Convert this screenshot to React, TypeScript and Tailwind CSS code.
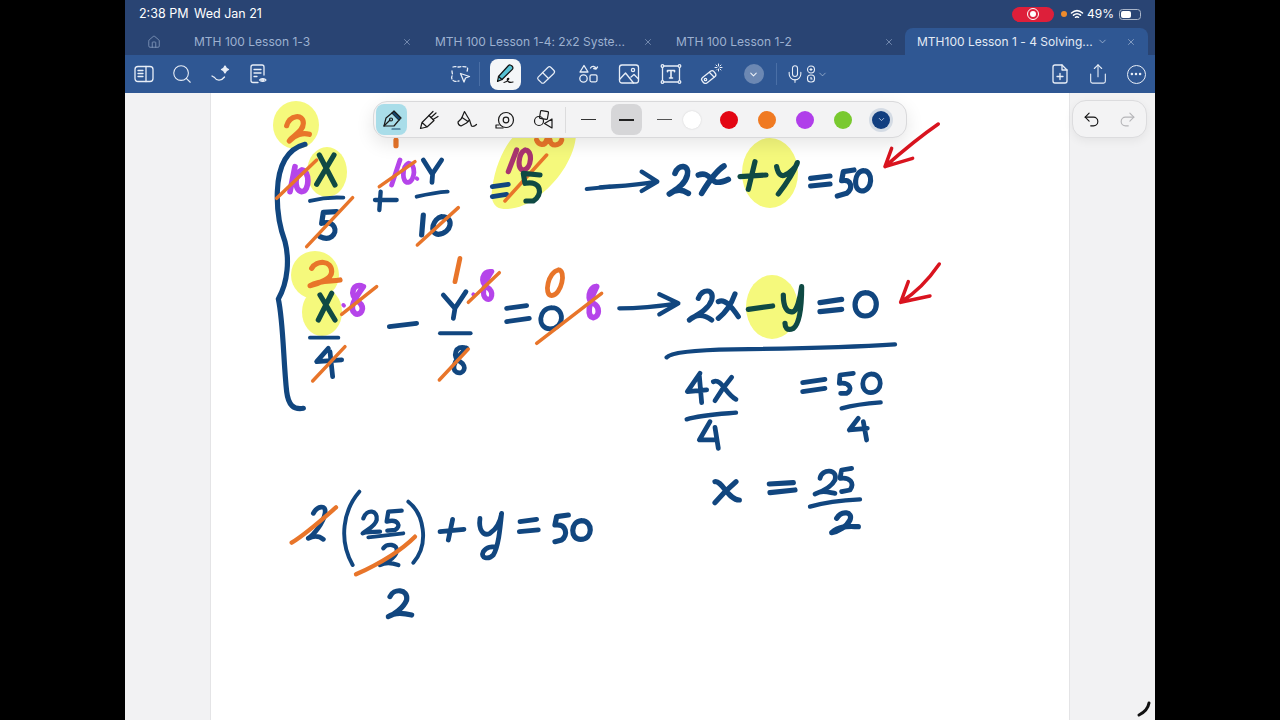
import { ChevronDown, X, Search, Share, Ellipsis, House, Undo2, Redo2, Mic } from 'lucide-react'

const font = { fontFamily: 'Inter, "Liberation Sans", sans-serif' }

const BLUE = '#11467f'
const GREEN = '#0f4a44'
const ORANGE = '#e8752a'
const PURPLE = '#b545ea'
const RED = '#d9141f'
const YELLOW = '#f5f97c'

type Stroke = [string, string, number]

// ink strokes, coordinates are taken from 3x crops so each group gets its own origin
const leftInk: Stroke[] = [
  ['M135 148C90 160 55 200 52 290C50 350 60 400 75 440C88 490 85 560 55 612C70 680 70 800 80 890C85 930 100 945 130 940', BLUE, 12],
  ['M80 92C90 60 130 55 130 85C130 110 100 120 88 138C105 118 130 112 148 118', ORANGE, 12],
  ['M105 215L90 290M125 225C105 235 100 285 125 290C150 290 150 225 125 225', PURPLE, 13],
  ['M50 310L170 195', ORANGE, 8],
  ['M178 180L225 270M222 180L170 268', GREEN, 12],
  ['M150 318C180 310 220 306 250 308', BLUE, 9],
  ['M230 350L190 352L185 385C225 375 235 410 215 425C205 432 190 430 180 425', BLUE, 12],
  ['M140 455L278 308', ORANGE, 8],
  ['M345 315L410 315M362 290L358 345', BLUE, 10],
  ['M420 195L395 270M445 205C425 215 425 265 445 262C465 258 470 205 445 205', PURPLE, 11],
  ['M470 250L472 252', PURPLE, 9],
  ['M358 275L465 200', ORANGE, 8],
  ['M408 135L408 152', ORANGE, 12],
  ['M490 195L515 235M545 195L518 235L516 262', BLUE, 11],
  ['M470 305C500 298 530 292 563 290', BLUE, 9],
  ['M490 360L485 420M545 365C520 370 505 415 535 418C575 415 585 365 545 365', BLUE, 12],
  ['M472 450L595 338', ORANGE, 8],
  ['M697 275L745 268M697 305L740 298', BLUE, 11],
  ['M770 165L745 230M795 165C775 175 770 225 790 225C815 222 820 165 795 165', '#a93470', 12],
  ['M830 135C835 150 855 155 860 135M870 135C870 155 900 155 905 135', ORANGE, 12],
  ['M735 318L860 180', ORANGE, 8],
  ['M840 240L790 235L795 265C845 255 850 300 820 318L798 318', GREEN, 12],
  ['M980 282L1050 275', BLUE, 9],

  ['M155 520C170 495 215 495 215 530C215 550 180 565 150 572C180 555 215 560 240 555', ORANGE, 12],
  ['M180 600L225 675M215 595L175 675', GREEN, 12],
  ['M150 728L235 728', BLUE, 9],
  ['M205 760L170 800L245 795M210 770L218 845', BLUE, 11],
  ['M158 858L255 755', ORANGE, 8],
  ['M310 575C280 560 265 600 295 620C320 640 300 665 285 655C265 640 285 610 310 575', PURPLE, 13],
  ['M250 630L252 632', PURPLE, 9],
  ['M245 658L350 575', ORANGE, 8],
  ['M388 695L470 685', BLUE, 11],
  ['M550 600L585 640M618 590L585 640L580 670', BLUE, 11],
  ['M600 490L585 560', ORANGE, 11],
  ['M695 530C665 525 660 565 680 575C705 590 695 620 680 612C660 600 675 560 695 530', PURPLE, 12],
  ['M640 598L642 600', PURPLE, 9],
  ['M625 622L718 533', ORANGE, 8],
  ['M540 715L632 715', BLUE, 9],
  ['M620 760C585 745 575 790 600 800C625 815 610 840 590 832C570 820 590 785 620 760', BLUE, 11],
  ['M538 855L625 762', ORANGE, 8],
  ['M740 640L800 632M740 680L808 670', BLUE, 11],
  ['M875 638C835 640 830 700 870 702C915 700 915 638 875 638', BLUE, 11],
  ['M895 525C865 530 850 600 875 602C905 600 920 525 895 525', ORANGE, 11],
  ['M1010 575C985 575 980 620 1000 625C1020 635 1020 665 1000 668C980 665 985 625 1010 575', PURPLE, 13],
  ['M830 745L1025 595', ORANGE, 8],
]

const rightInk: Stroke[] = [
  ['M0 232C50 228 100 228 170 215M125 185L172 215L125 243', BLUE, 10],
  ['M225 190C235 160 270 165 262 195C255 225 225 240 208 252C230 235 250 240 265 250', BLUE, 13],
  ['M295 195C320 185 330 205 345 215C355 220 370 215 385 208M372 168C345 185 320 225 305 250', BLUE, 13],
  ['M420 200L498 195M465 155L445 238', GREEN, 12],
  ['M530 170C535 195 545 200 555 195C570 190 590 170 592 158C580 190 560 220 535 252', GREEN, 12],
  ['M632 205L690 198M632 228L690 222', BLUE, 12],
  ['M762 180L730 185L725 212C755 205 760 235 740 250L712 258', BLUE, 12],
  ['M790 182C762 185 758 240 785 243C818 243 822 182 790 182', BLUE, 12],
  ['M1015 42C960 80 900 130 855 170M875 115L855 170L938 145', RED, 8],
  ['M58 595C110 595 170 590 235 580M178 553L235 580L178 613', BLUE, 10],
  ['M295 565C305 535 345 535 335 570C325 600 290 615 268 630C290 610 315 615 335 630', BLUE, 12],
  ['M355 575C375 565 395 590 415 620M405 552C395 580 375 610 355 625', BLUE, 12],
  ['M445 598L518 588', GREEN, 12],
  ['M550 555C550 590 560 610 580 605C590 600 600 570 605 530C605 590 600 640 580 655C560 665 555 650 555 640', GREEN, 12],
  ['M660 578L725 568M660 605L725 598', BLUE, 12],
  ['M797 548C755 550 755 618 795 618C840 618 840 548 797 548', BLUE, 12],
  ['M1018 462C985 510 945 550 902 577M925 515L902 577L990 558', RED, 8],
  ['M200 742C210 730 260 720 400 718C560 716 750 712 885 703', BLUE, 10],
]

const solveInk: Stroke[] = [
  ['M150 100L112 155L170 150M148 108L155 188', BLUE, 11],
  ['M190 125C215 115 225 160 258 178M245 112C230 130 205 165 195 182', BLUE, 11],
  ['M110 238C150 225 210 222 258 218', BLUE, 10],
  ['M180 245L148 300L200 300M195 262L205 325', BLUE, 11],
  ['M458 128L525 118M458 155L525 145', BLUE, 11],
  ['M610 100L570 105L568 130C600 125 610 150 590 160L572 160', BLUE, 11],
  ['M665 102C630 105 630 158 662 158C700 158 700 102 665 102', BLUE, 11],
  ['M575 205C610 195 650 190 692 187', BLUE, 10],
  ['M625 235L598 270L652 265M640 245L650 300', BLUE, 11],
  ['M195 425C215 420 235 480 268 480M258 425C240 440 210 470 195 488', BLUE, 12],
  ['M358 432L430 428M360 458L435 450', BLUE, 12],
  ['M510 415C515 385 565 385 555 420C545 440 515 455 495 462C515 450 530 455 555 460', BLUE, 11],
  ['M605 385L575 390L570 415C600 410 615 430 600 450L575 455', BLUE, 11],
  ['M480 500C530 485 585 480 630 478', BLUE, 10],
  ['M560 535C575 510 610 515 600 540C590 560 565 575 545 578C570 555 600 560 625 560', BLUE, 12],
]

const substituteInk: Stroke[] = [
  ['M130 100C140 80 170 70 165 100C160 130 130 165 115 175C135 165 150 170 160 178', BLUE, 11],
  ['M65 188C110 160 160 115 198 82', ORANGE, 10],
  ['M268 35C220 90 205 180 248 255', BLUE, 9],
  ['M280 115C290 85 325 90 320 120C315 140 290 150 278 160C290 155 310 155 330 155', BLUE, 10],
  ['M395 92L355 95L350 125C385 115 395 140 375 150L352 152', BLUE, 10],
  ['M295 172L400 160', BLUE, 9],
  ['M340 205C350 190 385 190 380 215C375 235 345 250 330 255C350 245 370 250 385 255', BLUE, 10],
  ['M258 283C320 255 390 215 435 170', ORANGE, 10],
  ['M415 65C460 100 480 190 430 248', BLUE, 9],
  ['M510 155L582 148M548 118L535 180', BLUE, 11],
  ['M630 115C625 150 640 170 660 160C675 150 690 130 695 100C690 150 685 200 670 225C655 240 630 235 640 215C650 200 665 200 680 200', BLUE, 11],
  ['M750 125L800 118M748 155L805 150', BLUE, 11],
  ['M895 105L860 110L855 135C890 130 895 165 875 180L855 185', BLUE, 12],
  ['M935 122C900 125 900 178 932 178C970 178 970 122 935 122', BLUE, 12],
  ['M360 350C370 325 415 325 410 360C400 385 370 405 355 410C375 395 405 400 425 405', BLUE, 12],
]

function InkGroup({ x, y, strokes }: { x: number; y: number; strokes: Stroke[] }) {
  return (
    <g transform={`translate(${x} ${y}) scale(0.3333)`} fill="none" strokeLinecap="round" strokeLinejoin="round">
      {strokes.map(([d, color, width], i) => (
        <path key={i} d={d} stroke={color} strokeWidth={width * 1.3} />
      ))}
    </g>
  )
}

function Ink() {
  return (
    <svg className="absolute inset-0 h-full w-full" viewBox="125 93 1030 627">
      <g fill={YELLOW}>
        <ellipse cx="296" cy="125" rx="23" ry="24" />
        <ellipse cx="327" cy="172" rx="20" ry="25" />
        <path d="M492 190C495 165 505 145 515 135L576 135C575 155 560 180 540 195C525 208 505 212 497 207C492 203 491 197 492 190Z" />
        <ellipse cx="315" cy="275" rx="24" ry="24" />
        <ellipse cx="322" cy="312" rx="20" ry="24" />
        <ellipse cx="770" cy="173" rx="28" ry="35" />
        <ellipse cx="772" cy="307" rx="26" ry="32" />
      </g>
      <InkGroup x={260} y={95} strokes={leftInk} />
      <InkGroup x={600} y={110} strokes={rightInk} />
      <InkGroup x={650} y={340} strokes={solveInk} />
      <InkGroup x={270} y={480} strokes={substituteInk} />
      <path d="M1149 703C1148 709 1145 712 1139 715" fill="none" stroke="#111" strokeWidth="3" strokeLinecap="round" />
    </svg>
  )
}

const tabs = ['MTH 100 Lesson 1-3', 'MTH 100 Lesson 1-4: 2x2 Syste...', 'MTH 100 Lesson 1-2']

function Tabs() {
  return (
    <div className="flex h-[27px] items-stretch text-[12px] text-[#9db1d0] [font-feature-settings:'calt'_0]">
      <div className="flex w-[57px] items-center pl-[22px]">
        <House size={14} strokeWidth={1.3} className="text-[#8ea3c4]" />
      </div>
      {tabs.map((t) => (
        <div key={t} className="flex w-[241px] items-center justify-between pl-3 pr-[11px]">
          <span>{t}</span>
          <X size={10} strokeWidth={1.5} />
        </div>
      ))}
      <div className="flex w-[243px] items-center rounded-t-[8px] bg-[#2f5793] pl-3 pr-[12px] text-[#e4ebf5]">
        <span>MTH100 Lesson 1 - 4 Solving...</span>
        <ChevronDown size={11} strokeWidth={1.6} className="ml-auto text-[#b4c4dc]" />
        <X size={10} strokeWidth={1.5} className="ml-[18px] text-[#b4c4dc]" />
      </div>
    </div>
  )
}

function Ico({ children }: { children: React.ReactNode }) {
  return (
    <svg width="24" height="24" viewBox="0 0 24 24" fill="none" stroke="#e8eef7" strokeWidth="1.3" strokeLinecap="round" strokeLinejoin="round">
      {children}
    </svg>
  )
}

function MainToolbar() {
  return (
    <div className="flex h-[38px] items-center bg-[#2f5793] pl-[7px] pr-[7px]">
      <div className="flex items-center gap-[14px]">
        <Ico>
          <rect x="3" y="4.5" width="18" height="15" rx="3" />
          <path d="M14 4.5v15M6 8.5h5M6 11.5h5M6 14.5h5" />
        </Ico>
        <Search size={24} strokeWidth={1.2} color="#e8eef7" className="p-[1px]" />
        <Ico>
          <path d="M4 14l2.5 1.5M6.5 15.5c2 3.5 7 3.5 10-.5" />
          <path d="M17 4l1.3 2.2L20.5 7.5l-2.2 1.3L17 11l-1.3-2.2L13.5 7.5l2.2-1.3z" fill="#e8eef7" />
        </Ico>
        <Ico>
          <path d="M12 20.5H7a2 2 0 0 1-2-2V5a2 2 0 0 1 2-2h9a2 2 0 0 1 2 2v8" />
          <path d="M8 7.5h7M8 11h7M8 14.5h3" />
          <path d="M13.5 18c1-1.700 5.500-1.700 6.500 0-1 1.700-5.500 1.700-6.500 0z" />
          <circle cx="16.700" cy="18" r="1" />
        </Ico>
      </div>
      <div className="ml-[178px] flex items-center">
        <Ico>
          <path d="M5 5c2-1 3 0 5 0s5-1 8 0 1 3 1 5M4 9c0 2 1 3 0 5s0 4 2 5 3 0 5 0" strokeDasharray="3 2" />
          <path d="M12.500 11.500l9 3-4 1.500-1.500 4z" />
        </Ico>
        <div className="ml-[7px] mr-[10px] h-[24px] w-px bg-[#4a6fa6]" />
        <div className="mr-[13px] flex h-[31px] w-[31px] items-center justify-center rounded-[8px] bg-[#f4f6f8]">
          <svg width="24" height="24" viewBox="0 0 24 24" fill="none" stroke="#111" strokeWidth="1.200" strokeLinejoin="round" strokeLinecap="round">
            <path d="M3.500 19.500l1-5L14.500 3.500c1-1 2.500-.5 3.500.5s1.300 2.300.3 3.300L8 17.500z" fill="#57c1d3" />
            <path d="M4.500 14.500l3.500 3" />
            <path d="M10 20.500c2 0 3-1 4.500-3 1-1.300-1-2-1.200 0-.2 2 2 3.500 5.700 2.500" />
          </svg>
        </div>
        <div className="flex items-center gap-[17.500px]">
          <Ico>
            <path d="M3.500 15.500L14 5c1-1 2.500-1 3.500 0l3 3c1 1 1 2.500 0 3.500L10 21.500c-1 .8-2 .8-3 0l-3.500-3.500c-.7-.8-.7-1.800 0-2.500z" transform="scale(.92) translate(1 1)" />
            <path d="M8.500 10.500l6 6" />
          </Ico>
          <Ico>
            <path d="M8 3.500l4 6.500H4z" />
            <path d="M14.500 6c1.500-2.500 5-2 5.500 1M20 7l1.500-2M20 7l-2.300-.5" />
            <circle cx="7.500" cy="16.500" r="3.700" />
            <rect x="14" y="12.800" width="7" height="7" rx="1.500" />
          </Ico>
          <Ico>
            <rect x="2.500" y="3" width="19" height="18" rx="2.500" />
            <circle cx="16" cy="8" r="1.600" />
            <path d="M2.500 17.500l6-6.500 8 10M14 15l3-2.500 4.500 4.500" />
          </Ico>
          <Ico>
            <rect x="3.500" y="4" width="17" height="16" />
            <path d="M8.500 8.500h7M12 8.500v7.500M10.500 16h3M8.500 8.500v1.200M15.500 8.500v1.200" strokeWidth="1.600" />
            <circle cx="3.500" cy="4" r="1.300" fill="#2f5793" />
            <circle cx="20.500" cy="4" r="1.300" fill="#2f5793" />
            <circle cx="3.500" cy="20" r="1.300" fill="#2f5793" />
            <circle cx="20.500" cy="20" r="1.300" fill="#2f5793" />
          </Ico>
          <Ico>
            <rect x="1" y="12" width="15" height="7" rx="2.500" transform="rotate(-38 8 15)" />
            <circle cx="5.500" cy="17.500" r="1.200" />
            <path d="M9.500 10.500l4.500 4.500" />
            <path d="M18.500 2v2M18.500 7v2M15 5.500h2M20 5.500h2M16 3l1 1M20 7l1 1M21 3l-1 1M16.500 8l.5-.5" strokeWidth="1" />
          </Ico>
          <div className="flex h-[20px] w-[24px] items-center justify-center">
            <div className="flex h-[20px] w-[20px] items-center justify-center rounded-full bg-[#6c88b3]">
              <ChevronDown size={11} strokeWidth={2.200} color="#eef2f8" />
            </div>
          </div>
        </div>
        <div className="ml-[10px] mr-[8px] h-[22px] w-px bg-[#4a6fa6]" />
        <div className="flex items-center">
          <Mic size={20} strokeWidth={1.300} color="#e8eef7" />
          <svg width="12" height="20" viewBox="0 0 12 20" fill="none" stroke="#e8eef7" strokeWidth="1.100">
            <circle cx="6" cy="5.500" r="3.500" />
            <path d="M4.500 5.500h3M6 4v3" />
            <rect x="2.500" y="11" width="7" height="7" rx="3" />
            <path d="M6 13v2h1.500" />
          </svg>
          <ChevronDown size={11} strokeWidth={1.300} color="#c8d4e6" />
        </div>
      </div>
      <div className="ml-auto flex items-center gap-[14px]">
        <Ico>
          <path d="M5 5a2 2 0 0 1 2-2h7l5 5v11a2 2 0 0 1-2 2H7a2 2 0 0 1-2-2z" />
          <path d="M14 3v5h5M12 11.500v6M9 14.500h6" />
        </Ico>
        <Share size={24} strokeWidth={1.200} color="#e8eef7" className="p-[1px]" />
        <div className="relative flex h-[24px] w-[24px] items-center justify-center">
          <div className="flex h-[19px] w-[19px] items-center justify-center rounded-full border border-[#e8eef7]">
            <Ellipsis size={14} strokeWidth={2.400} color="#e8eef7" />
          </div>
        </div>
      </div>
    </div>
  )
}

function PenIco({ children }: { children: React.ReactNode }) {
  return (
    <svg width="24" height="24" viewBox="0 0 24 24" fill="none" stroke="#1a1a1a" strokeWidth="1.200" strokeLinecap="round" strokeLinejoin="round">
      {children}
    </svg>
  )
}

const swatches = ['#e30613', '#f07a22', '#b03eea', '#79c92f']

function PenBar() {
  return (
    <div className="absolute left-[248px] top-[8px] flex h-[37px] w-[534px] items-center rounded-[14px] border border-[#d9d9db] bg-[#f3f3f4] pl-[2px] shadow-[0_6px_18px_rgba(0,0,0,0.10)]">
      <div className="flex h-[31px] w-[31px] items-center justify-center rounded-[8px] bg-[#a9dde9]">
        <PenIco>
          <path d="M4 18l2-8 6-5 7 7-5 6z" />
          <path d="M12 5l2-2 7 7-2 2" fill="#17486f" />
          <path d="M4 18l6-6" />
          <circle cx="11" cy="11.500" r="1.500" />
          <path d="M12 21h8" stroke="#17486f" />
        </PenIco>
      </div>
      <div className="ml-[10px] flex items-center gap-[14px]">
        <PenIco>
          <path d="M3.500 20.500l1.500-6 7-7 5 5-7 6.500zM5 14.500l4.500 4" />
          <path d="M12 7.500l4-4M14 9.500l5-4.500M16 11.500l5-3" />
        </PenIco>
        <PenIco>
          <path d="M9.500 3.500l2 3.500 3 5-3 3-5.500 3c-2-.5-3-2-3-4l3.500-3.500z" />
          <path d="M14.500 12l2 6c2 1 3.500 0 5-1.500M7 9.500l6 4" />
        </PenIco>
        <PenIco>
          <circle cx="13" cy="12" r="7.500" />
          <circle cx="13" cy="12" r="2.800" />
          <path d="M3 20h7M3 20v-3h3" />
        </PenIco>
        <PenIco>
          <rect x="9" y="3" width="8" height="8" rx="1" transform="rotate(10 13 7)" />
          <circle cx="8" cy="13" r="4.500" />
          <path d="M21 11v9l-7.500-4.500z" />
        </PenIco>
      </div>
      <div className="ml-[10px] h-[26px] w-px bg-[#dcdcdd]" />
      <div className="ml-[15px] h-[1.500px] w-[15px] bg-[#333]" />
      <div className="ml-[15px] flex h-[31px] w-[31px] items-center justify-center rounded-[8px] bg-[#d6d6d8]">
        <div className="h-[2px] w-[15px] bg-[#222]" />
      </div>
      <div className="ml-[15px] h-px w-[15px] bg-[#555]" />
      <div className="ml-[11px] h-[18px] w-[18px] rounded-full bg-white shadow-[0_0_2px_rgba(0,0,0,0.15)]" />
      <div className="ml-[19px] flex items-center gap-[20px]">
        {swatches.map((c) => (
          <div key={c} className="h-[18px] w-[18px] rounded-full" style={{ background: c }} />
        ))}
      </div>
      <div className="ml-[17px] flex h-[24px] w-[24px] items-center justify-center rounded-full bg-[#d4dbe4]">
        <div className="flex h-[18px] w-[18px] items-center justify-center rounded-full bg-[#123f80]">
          <ChevronDown size={9} strokeWidth={2} color="#d8e2f0" />
        </div>
      </div>
    </div>
  )
}

function UndoPill() {
  return (
    <div className="absolute right-[8px] top-[7px] flex h-[38px] w-[75px] items-center justify-between rounded-[14px] border border-[#dcdcde] bg-[#f3f3f4] px-[9px] shadow-[0_3px_10px_rgba(0,0,0,0.06)]">
      <Undo2 size={19} strokeWidth={1.400} color="#111" />
      <Redo2 size={19} strokeWidth={1.400} color="#b5b5b8" />
    </div>
  )
}

export default function App() {
  return (
    <div className="flex h-[720px] w-[1280px] overflow-hidden bg-black" style={font}>
      <div className="ml-[125px] flex h-full w-[1030px] flex-col">
        <div className="bg-[#294473]">
          <div className="flex h-[28px] items-center pl-[14px] pr-[14px] text-[12.500px] text-white">
            <span className="w-[55px]">2:38 PM</span>
            <span>Wed Jan 21</span>
            <div className="ml-auto flex items-center gap-[3px] text-[12px]">
              <div className="mr-[4px] flex h-[15px] w-[42px] items-center justify-center rounded-full bg-[#dd1f3a]">
                <div className="flex h-[12px] w-[12px] items-center justify-center rounded-full border border-white">
                  <div className="h-[6px] w-[6px] rounded-full bg-white" />
                </div>
              </div>
              <div className="h-[6px] w-[6px] rounded-full bg-[#ef8b2c]" />
              <svg width="14" height="11" viewBox="0 0 14 11" fill="none" stroke="white" strokeWidth="1.500" strokeLinecap="round">
                <path d="M1.500 4C5 1 9 1 12.500 4M3.500 6.200c2.200-1.800 4.800-1.800 7 0M5.500 8.300c1-.8 2-.8 3 0" />
              </svg>
              <span>49%</span>
              <div className="ml-[2px] flex h-[11px] w-[22px] items-center rounded-[3.500px] border border-[#a9b5c9] p-[1px]">
                <div className="h-full w-[10px] rounded-[2px] bg-white" />
              </div>
            </div>
          </div>
          <Tabs />
        </div>
        <MainToolbar />
        <div className="relative flex flex-1 bg-[#f2f2f3]">
          <div className="ml-[85px] h-full w-[860px] border-x border-[#e4e4e6] bg-white" />
          <Ink />
          <PenBar />
          <UndoPill />
        </div>
      </div>
    </div>
  )
}
